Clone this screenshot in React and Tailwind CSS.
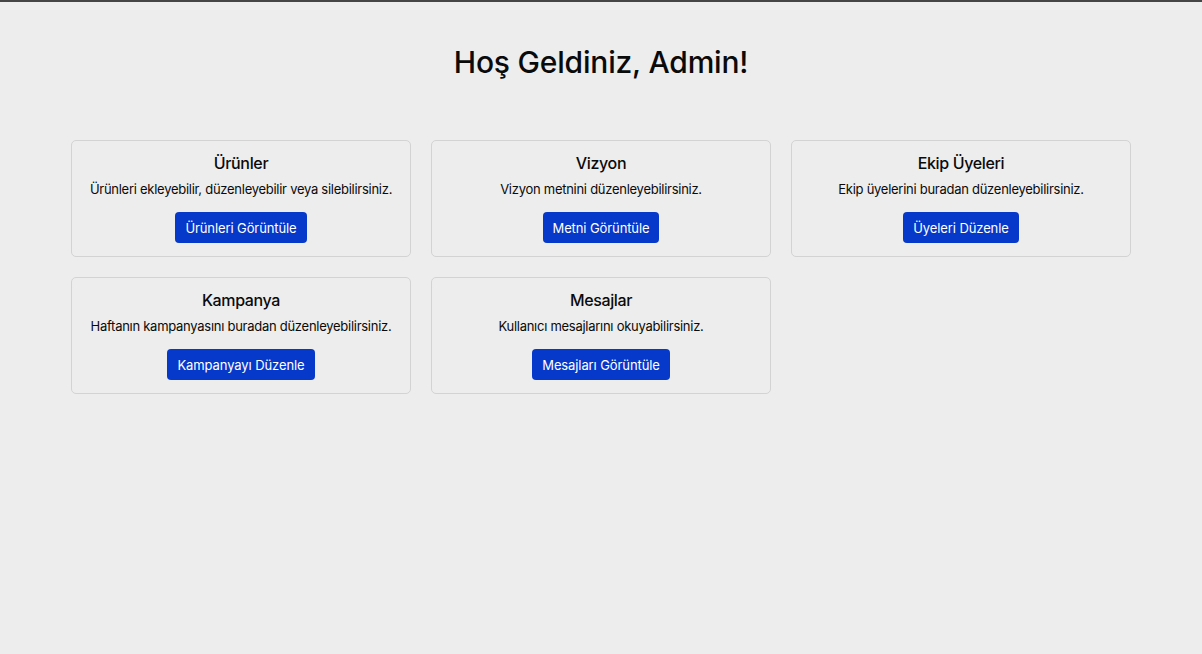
import React from "react";

const cards = [
  { title: "Ürünler", desc: "Ürünleri ekleyebilir, düzenleyebilir veya silebilirsiniz.", btn: "Ürünleri Görüntüle" },
  { title: "Vizyon", desc: "Vizyon metnini düzenleyebilirsiniz.", btn: "Metni Görüntüle" },
  { title: "Ekip Üyeleri", desc: "Ekip üyelerini buradan düzenleyebilirsiniz.", btn: "Üyeleri Düzenle" },
  { title: "Kampanya", desc: "Haftanın kampanyasını buradan düzenleyebilirsiniz.", btn: "Kampanyayı Düzenle" },
  { title: "Mesajlar", desc: "Kullanıcı mesajlarını okuyabilirsiniz.", btn: "Mesajları Görüntüle" },
];

export default function App() {
  return (
    <div className="min-h-[654px] bg-[#ededed] border-t-2 border-[#454545] font-['Inter',sans-serif] text-[#0a0a0a]">
      <h1 className="text-center text-[30px] font-medium leading-[36px] pt-[42px] tracking-[-0.2px]">
        Hoş Geldiniz, Admin!
      </h1>
      <div className="mx-auto w-[1060px] mt-[60px] grid grid-cols-3 gap-5">
        {cards.map((c) => (
          <div
            key={c.title}
            className="h-[117px] border border-[#d3d3d3] rounded-[5px] flex flex-col items-center text-center pt-[12px]"
          >
            <h3 className="text-[16px] font-medium leading-[20px] tracking-[-0.35px]">{c.title}</h3>
            <p className="text-[13px] leading-[18px] mt-[7px] tracking-[-0.27px] whitespace-nowrap">{c.desc}</p>
            <button className="mt-[14px] h-[31px] px-[10px] rounded-[4px] bg-[#0638ca] text-white text-[13px] leading-[18px] tracking-[-0.1px]">
              {c.btn}
            </button>
          </div>
        ))}
      </div>
    </div>
  );
}
